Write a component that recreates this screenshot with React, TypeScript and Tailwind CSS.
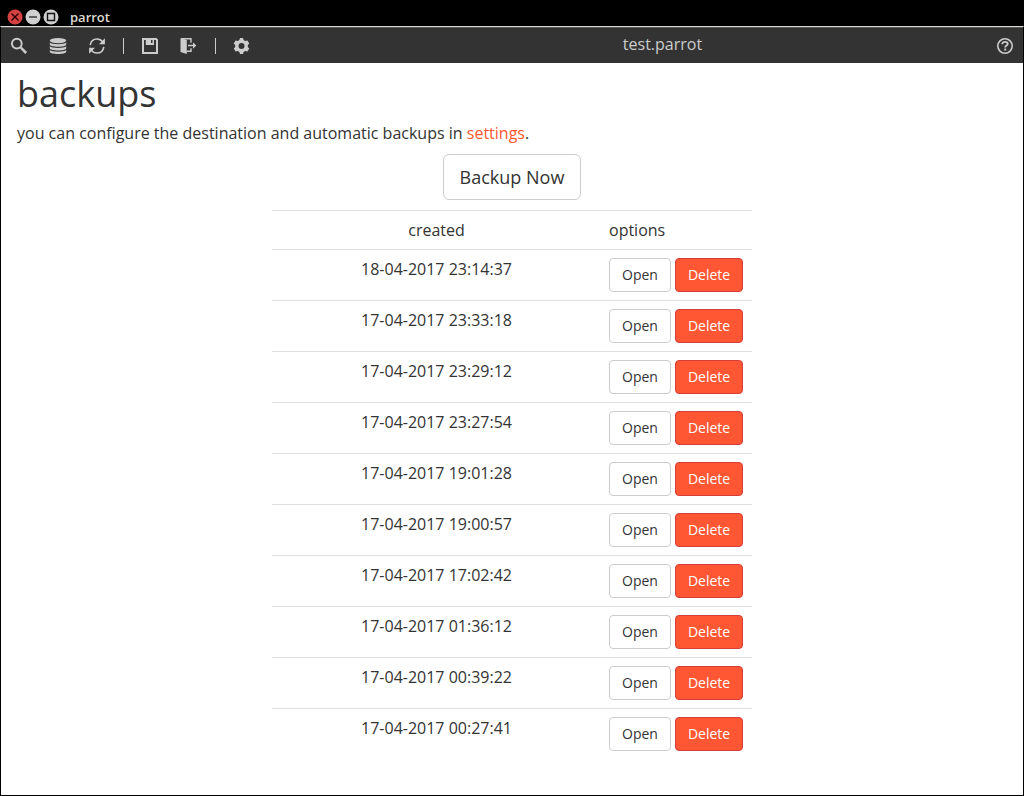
import type { ReactNode } from "react";

const backups = [
  "18-04-2017 23:14:37",
  "17-04-2017 23:33:18",
  "17-04-2017 23:29:12",
  "17-04-2017 23:27:54",
  "17-04-2017 19:01:28",
  "17-04-2017 19:00:57",
  "17-04-2017 17:02:42",
  "17-04-2017 01:36:12",
  "17-04-2017 00:39:22",
  "17-04-2017 00:27:41",
];

function ToolButton({ label, children }: { label: string; children: ReactNode }) {
  return (
    <button type="button" aria-label={label} className="flex size-[18px] items-center justify-center">
      <svg viewBox="0 0 18 18" className="size-[18px]" fill="currentColor" aria-hidden="true">
        {children}
      </svg>
    </button>
  );
}

function Divider() {
  return <span className="h-4 w-px bg-[#cccccc]" />;
}

function WindowBar() {
  return (
    <header className="flex h-[26px] items-end gap-0.5 bg-black pb-px pl-[7px]">
      <button type="button" aria-label="Close" className="size-4">
        <svg viewBox="0 0 16 16" className="size-4">
          <circle cx="8" cy="8" r="7.5" fill="#d64242" />
          <path d="M4.5 4.5l7 7M11.5 4.5l-7 7" stroke="#220000" strokeWidth="1.4" />
        </svg>
      </button>
      <button type="button" aria-label="Minimize" className="size-4">
        <svg viewBox="0 0 16 16" className="size-4">
          <circle cx="8" cy="8" r="7.5" fill="#d0d0d0" />
          <path d="M4 8h8" stroke="#444444" strokeWidth="1.6" />
        </svg>
      </button>
      <button type="button" aria-label="Maximize" className="size-4">
        <svg viewBox="0 0 16 16" className="size-4">
          <circle cx="8" cy="8" r="7.5" fill="#d0d0d0" />
          <path d="M4.5 4.5h7v7h-7z" fill="none" stroke="#111111" strokeWidth="1.4" />
        </svg>
      </button>
      <span className="ml-[9px] text-[13px] leading-4 font-semibold text-[#dfdbd2]">parrot</span>
    </header>
  );
}

function Toolbar() {
  return (
    <nav className="flex h-9 items-center border-t border-[#5a5a5a] bg-[#333333] px-[9px] text-[#cccccc]">
      <div className="flex items-center gap-[17px]">
        <div className="flex items-center gap-[21px]">
          <ToolButton label="Search">
            <circle cx="6.8" cy="6.6" r="4.9" fill="none" stroke="currentColor" strokeWidth="1.9" />
            <path d="M9.800 11.200l1.600-1.600 5.700 5.500-1.900 1.900z" />
          </ToolButton>
          <ToolButton label="Database">
            <ellipse cx="9" cy="3.600" rx="8.200" ry="2.700" />
            <path d="M.8 5.400c1.800 2.300 14.600 2.300 16.400 0v2c0 3-16.400 3-16.400 0z" />
            <path d="M.8 9.200c1.800 2.300 14.600 2.300 16.400 0v2c0 3-16.400 3-16.400 0z" />
            <path d="M.8 13c1.800 2.300 14.600 2.300 16.400 0v1.800c0 3-16.400 3-16.400 0z" />
          </ToolButton>
          <ToolButton label="Refresh">
            <path d="M2.200 8.200C2.800 4.300 5.600 2 9 2c2.400 0 4.300 1 5.700 2.900M15.800 9.800C15.200 13.700 12.400 16 9 16c-2.400 0-4.300-1-5.700-2.900" fill="none" stroke="currentColor" strokeWidth="1.600" />
            <path d="M16.900 1.300v5.900h-5.900zM1.100 16.700v-5.900h5.900z" />
          </ToolButton>
        </div>
        <Divider />
        <div className="flex items-center gap-[21px]">
          <ToolButton label="Save">
            <path fillRule="evenodd" d="M1 1h14.500L17 2.500V17H1zM3 3v12h12V3h-2v5H4.800V3zM10 3v3h1.500V3z" />
          </ToolButton>
          <ToolButton label="Close project">
            <path d="M.5 1.300L6.800 3v14L.5 15z" />
            <path d="M1 1.700h10v4.100M6.800 14.300H11v-3.100" fill="none" stroke="currentColor" strokeWidth="1.400" />
            <path d="M8 7.800h5V5.300l3.300 3.200L13 11.700V9.200H8z" />
          </ToolButton>
        </div>
        <Divider />
        <ToolButton label="Settings">
          <path fillRule="evenodd" d="M7 1h3l.6 2.100 1.600.9 2.200-.6 1.900 3-1.500 1.600v2l1.500 1.600-1.900 3-2.200-.6-1.600.9L10 17H7l-.6-2.100-1.600-.9-2.200.6-1.900-3L2.200 10V8L.7 6.400l1.900-3 2.200.6 1.600-.9zM8.500 6a3 3 0 1 0 0 6 3 3 0 0 0 0-6z" />
        </ToolButton>
      </div>
      <div className="flex-1 pb-1 pl-[78px] text-center">test.parrot</div>
      <ToolButton label="Help">
        <circle cx="9" cy="9" r="7.200" fill="none" stroke="currentColor" strokeWidth="1.600" />
        <path d="M6.300 7.200V6.500C6.800 5.300 7.800 4.900 9 4.900c1.600 0 2.700.7 2.700 2 0 1.800-2.500 1.500-2.500 3.500" fill="none" stroke="currentColor" strokeWidth="1.900" />
        <path d="M8.200 11.600h2v1.900h-2z" />
      </ToolButton>
    </nav>
  );
}

export default function App() {
  return (
    <div className="flex min-h-screen flex-col bg-black font-['Open_Sans','Noto_Sans',sans-serif] text-base leading-[22px] text-[#333333]">
      <WindowBar />
      <div className="flex flex-1 flex-col border border-x-black border-t-[#d8d8d0] border-b-black bg-white">
        <Toolbar />
        <main className="flex-1 px-4 pt-2">
          <h1 className="text-[36px] leading-[46px]">backups</h1>
          <p className="mt-[5px]">
            you can configure the destination and automatic backups in{" "}
            <a href="#settings" className="text-[#ff5733]">settings</a>.
          </p>
          <div className="mt-[10px] flex justify-center">
            <button type="button" className="rounded-md border border-[#cccccc] bg-white px-4 py-[10px] text-lg leading-6">
              Backup Now
            </button>
          </div>
          <table className="mx-auto mt-[10px] w-full max-w-[480px] border-collapse">
            <thead>
              <tr className="border-t border-[#dddddd]">
                <th scope="col" className="p-2 text-center font-normal">created</th>
                <th scope="col" className="w-[151px] p-2 text-left font-normal">options</th>
              </tr>
            </thead>
            <tbody>
              {backups.map((created) => (
                <tr key={created} className="border-t border-[#dddddd]">
                  <td className="p-2 text-center align-top">{created}</td>
                  <td className="p-2">
                    <div className="flex gap-1 text-sm leading-5">
                      <button type="button" className="rounded border border-[#cccccc] bg-white px-3 py-1.5">Open</button>
                      <button type="button" className="rounded border border-[#d43f3a] bg-[#ff5733] px-3 py-1.5 text-white">Delete</button>
                    </div>
                  </td>
                </tr>
              ))}
            </tbody>
          </table>
        </main>
      </div>
    </div>
  );
}
